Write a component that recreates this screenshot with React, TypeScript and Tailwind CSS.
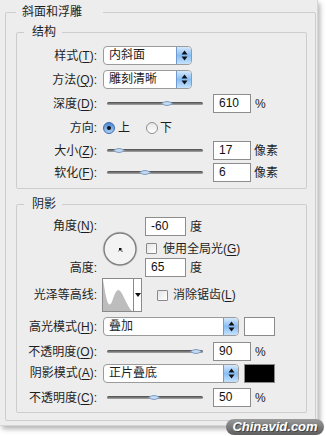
import type { ReactNode } from 'react';

const FONT = "font-['Liberation_Sans','Noto_Sans_CJK_SC',sans-serif]";

function Label({ children, className = '' }: { children: ReactNode; className?: string }) {
  return <div className={`w-[80px] shrink-0 whitespace-nowrap text-right ${className}`}>{children}</div>;
}

function Key({ k }: { k: string }) {
  return (
    <>
      (<span className="underline underline-offset-2">{k}</span>):
    </>
  );
}

function Field({ value, className = '' }: { value: string; className?: string }) {
  return (
    <div
      className={`h-[19px] border border-[#8d8d8d] bg-white pl-[5px] text-[12px] leading-[17px] text-[#111] ${className}`}
    >
      {value}
    </div>
  );
}

function Slider({ pos }: { pos: number }) {
  return (
    <div className="relative ml-[10px] flex h-[19px] w-[96px] items-center">
      <div className="h-[3px] w-full rounded-full bg-linear-to-b from-[#4a4a4a] to-[#a9a9a9]" />
      <svg className="absolute top-[6px]" style={{ left: pos }} width="12" height="7" viewBox="0 0 12 7">
        <path d="M0.5 3.5 Q6 -0.5 11.5 3.5 Q6 7.5 0.5 3.5 Z" fill="#c4daf2" stroke="#7f9cc0" strokeWidth="1" />
      </svg>
    </div>
  );
}

function Select({ value, width }: { value: string; width: string }) {
  return (
    <div className={`ml-[6px] flex h-[19px] ${width} rounded-[4px] border border-[#9b9b9b] bg-white`}>
      <div className="flex-1 pl-[5px] leading-[17px]">{value}</div>
      <div className="flex w-[15px] items-center justify-center rounded-r-[3px] border-l border-[#6f9bd0] bg-linear-to-b from-[#d6e8fb] via-[#86bdf4] to-[#c7e2fc]">
        <svg width="7" height="11" viewBox="0 0 7 11">
          <path d="M3.5 0.5 L6.5 4.5 L0.5 4.5 Z" fill="#111" />
          <path d="M3.5 10.5 L6.5 6.5 L0.5 6.5 Z" fill="#111" />
        </svg>
      </div>
    </div>
  );
}

function Checkbox({ className = '' }: { className?: string }) {
  return (
    <div
      className={`h-[11px] w-[11px] shrink-0 rounded-[1px] border border-[#8a8a8a] bg-linear-to-br from-[#e4e4e4] to-white ${className}`}
    />
  );
}

function Radio({ checked }: { checked?: boolean }) {
  return checked ? (
    <div className="flex h-[12px] w-[12px] items-center justify-center rounded-full border border-[#3e6aa8] bg-linear-to-b from-[#4d86d6] to-[#a9d1f7]">
      <div className="h-[4px] w-[4px] rounded-full bg-[#111]" />
    </div>
  ) : (
    <div className="h-[12px] w-[12px] rounded-full border border-[#8f8f8f] bg-linear-to-b from-[#e6e6e6] to-white" />
  );
}

export default function App() {
  return (
    <div className={`relative h-[436px] w-[326px] bg-white text-[12px] text-[#1e1e1e] ${FONT}`}>
      <div className="h-[426px] w-[318px] border-r border-b border-[#d6d6d6] bg-[#ededed] pt-[4px] pl-[5px] shadow-[2px_3px_5px_rgba(0,0,0,0.3)]">
        <fieldset className="w-[311px] rounded-[2px] border border-[#cdcdcd] pr-[8px] pb-[7px] pl-[10px]">
          <legend className="pr-[21px] pl-[6px] leading-[16px]">斜面和浮雕</legend>

          <fieldset className="mt-[4px] w-[291px] rounded-[2px] border border-[#cdcdcd] pt-[6px] pb-[6px]">
            <legend className="ml-[7px] pr-[6px] pl-[8px] leading-[16px]">结构</legend>

            <div className="flex h-[19px] items-center">
              <Label>样式<Key k="T" /></Label>
              <Select value="内斜面" width="w-[89px]" />
            </div>
            <div className="mt-[5px] flex h-[19px] items-center">
              <Label>方法<Key k="Q" /></Label>
              <Select value="雕刻清晰" width="w-[89px]" />
            </div>
            <div className="mt-[5px] flex h-[19px] items-center">
              <Label>深度<Key k="D" /></Label>
              <Slider pos={54} />
              <Field value="610" className="ml-[10px] w-[38px]" />
              <span className="ml-[4px]">%</span>
            </div>
            <div className="mt-[5px] flex h-[19px] items-center">
              <Label>方向:</Label>
              <div className="ml-[6px] flex items-center">
                <Radio checked />
                <span className="ml-[3px]">上</span>
                <div className="ml-[16px]">
                  <Radio />
                </div>
                <span className="ml-[2px]">下</span>
              </div>
            </div>
            <div className="mt-[4px] flex h-[19px] items-center">
              <Label>大小<Key k="Z" /></Label>
              <Slider pos={6} />
              <Field value="17" className="ml-[10px] w-[38px]" />
              <span className="ml-[3px]">像素</span>
            </div>
            <div className="mt-[3px] flex h-[19px] items-center">
              <Label>软化<Key k="F" /></Label>
              <Slider pos={32} />
              <Field value="6" className="ml-[10px] w-[38px]" />
              <span className="ml-[3px]">像素</span>
            </div>
          </fieldset>

          <fieldset className="mt-[7px] w-[291px] rounded-[2px] border border-[#cdcdcd] pt-[5px] pb-[5px]">
            <legend className="ml-[7px] pr-[6px] pl-[8px] leading-[16px]">阴影</legend>

            <div className="flex">
              <div className="flex w-[80px] shrink-0 flex-col text-right">
                <div className="h-[19px] leading-[19px]">角度<Key k="N" /></div>
                <div className="h-[22px]" />
                <div className="h-[19px] leading-[21px]">高度:</div>
              </div>
              <div className="mt-[14px] ml-[5px]">
                <svg width="36" height="36" viewBox="0 0 36 36">
                  <circle cx="18" cy="18" r="17" fill="none" stroke="#d8d8d8" strokeWidth="1" />
                  <circle cx="18" cy="18" r="16" fill="#f3f3f3" stroke="#7d7d7d" strokeWidth="1.4" />
                  <rect x="17" y="17" width="2.5" height="2.5" fill="#111" />
                  <rect x="19.5" y="19.5" width="1" height="1.5" fill="#444" />
                  <rect x="16" y="19.5" width="1" height="1" fill="#777" />
                </svg>
              </div>
              <div className="ml-[7px] flex flex-col">
                <div className="flex h-[19px] items-center">
                  <Field value="-60" className="w-[41px]" />
                  <span className="ml-[4px]">度</span>
                </div>
                <div className="flex h-[22px] items-center pt-[3px]">
                  <Checkbox className="ml-[1px]" />
                  <span className="ml-[6px]">
                    使用全局光(<span className="underline underline-offset-2">G</span>)
                  </span>
                </div>
                <div className="flex h-[19px] items-center">
                  <Field value="65" className="w-[41px]" />
                  <span className="ml-[4px]">度</span>
                </div>
              </div>
            </div>

            <div className="mt-[1px] flex h-[34px] items-center">
              <Label>光泽等高线:</Label>
              <div className="ml-[5px] flex h-[34px] w-[40px] border border-[#8a8a8a] bg-white">
                <svg width="30" height="32" viewBox="0 0 30 32">
                  <path
                    d="M0 32 L0 1 C1.5 8 3.5 25 6.5 25.5 C9.5 26 11 12 15 11 C19 10 23 26 29 32 Z"
                    fill="#bdbdbd"
                  />
                </svg>
                <div className="flex flex-1 items-center justify-center border-l border-[#8a8a8a]">
                  <svg width="6" height="4" viewBox="0 0 6 4">
                    <path d="M0 0 L6 0 L3 4 Z" fill="#111" />
                  </svg>
                </div>
              </div>
              <Checkbox className="ml-[15px]" />
              <span className="ml-[5px]">
                消除锯齿(<span className="underline underline-offset-2">L</span>)
              </span>
            </div>

            <div className="mt-[5px] flex h-[19px] items-center">
              <Label>高光模式<Key k="H" /></Label>
              <Select value="叠加" width="w-[136px]" />
              <div className="ml-[5px] h-[19px] w-[31px] border border-[#8a8a8a] bg-white" />
            </div>
            <div className="mt-[6px] flex h-[19px] items-center">
              <Label>不透明度<Key k="O" /></Label>
              <Slider pos={83} />
              <Field value="90" className="ml-[10px] w-[38px]" />
              <span className="ml-[4px]">%</span>
            </div>
            <div className="mt-[2px] flex h-[20px] items-center">
              <Label>阴影模式<Key k="A" /></Label>
              <Select value="正片叠底" width="w-[136px]" />
              <div className="ml-[5px] h-[19px] w-[31px] border border-[#8a8a8a] bg-black" />
            </div>
            <div className="mt-[5px] flex h-[19px] items-center">
              <Label>不透明度<Key k="C" /></Label>
              <Slider pos={41} />
              <Field value="50" className="ml-[10px] w-[38px]" />
              <span className="ml-[4px]">%</span>
            </div>
          </fieldset>
        </fieldset>
      </div>

      <div className="absolute top-[419px] left-[226px] flex h-[16px] w-[98px] items-center justify-center rounded-full bg-linear-to-b from-[#9a9a9a] to-[#5e5e5e]">
        <span className="text-[13px] leading-[16px] font-bold italic text-white [text-shadow:1px_1px_0_#444] font-['Liberation_Sans',sans-serif]">
          Chinavid.com
        </span>
      </div>
    </div>
  );
}
